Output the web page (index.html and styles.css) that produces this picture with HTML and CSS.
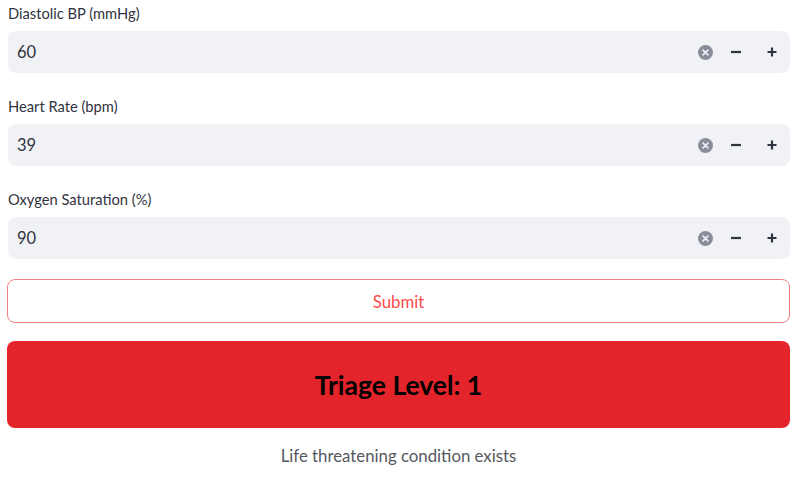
FILE: index.html
```html
<!DOCTYPE html>
<html>
<head>
<meta charset="utf-8">
<link rel="stylesheet" href="styles.css">
</head>
<body>
<main class="page">
  <div class="field">
    <label class="label">Diastolic BP (mmHg)</label>
    <div class="numinput">
      <span class="value">60</span>
      <span class="clear"><svg width="15" height="15" viewBox="0 0 16 16"><circle cx="8" cy="8" r="8" fill="#8a8d99"/><path d="M5.4 5.4 L10.6 10.6 M10.6 5.4 L5.4 10.6" stroke="#f0f2f6" stroke-width="1.7" stroke-linecap="round"/></svg></span>
      <span class="step"><svg width="12" height="12" viewBox="0 0 12 12"><path d="M1 6 H11" stroke="#31333f" stroke-width="2.2"/></svg></span>
      <span class="step"><svg width="12" height="12" viewBox="0 0 12 12"><path d="M1.5 6 H10.5 M6 1.5 V10.5" stroke="#31333f" stroke-width="2.2"/></svg></span>
    </div>
  </div>
  <div class="field">
    <label class="label">Heart Rate (bpm)</label>
    <div class="numinput">
      <span class="value">39</span>
      <span class="clear"><svg width="15" height="15" viewBox="0 0 16 16"><circle cx="8" cy="8" r="8" fill="#8a8d99"/><path d="M5.4 5.4 L10.6 10.6 M10.6 5.4 L5.4 10.6" stroke="#f0f2f6" stroke-width="1.7" stroke-linecap="round"/></svg></span>
      <span class="step"><svg width="12" height="12" viewBox="0 0 12 12"><path d="M1 6 H11" stroke="#31333f" stroke-width="2.2"/></svg></span>
      <span class="step"><svg width="12" height="12" viewBox="0 0 12 12"><path d="M1.5 6 H10.5 M6 1.5 V10.5" stroke="#31333f" stroke-width="2.2"/></svg></span>
    </div>
  </div>
  <div class="field field-last">
    <label class="label">Oxygen Saturation (%)</label>
    <div class="numinput">
      <span class="value">90</span>
      <span class="clear"><svg width="15" height="15" viewBox="0 0 16 16"><circle cx="8" cy="8" r="8" fill="#8a8d99"/><path d="M5.4 5.4 L10.6 10.6 M10.6 5.4 L5.4 10.6" stroke="#f0f2f6" stroke-width="1.7" stroke-linecap="round"/></svg></span>
      <span class="step"><svg width="12" height="12" viewBox="0 0 12 12"><path d="M1 6 H11" stroke="#31333f" stroke-width="2.2"/></svg></span>
      <span class="step"><svg width="12" height="12" viewBox="0 0 12 12"><path d="M1.5 6 H10.5 M6 1.5 V10.5" stroke="#31333f" stroke-width="2.2"/></svg></span>
    </div>
  </div>
  <button class="submit">Submit</button>
  <div class="result">Triage Level: 1</div>
  <p class="desc">Life threatening condition exists</p>
</main>
</body>
</html>
```

FILE: styles.css
```css
html, body {
  margin: 0;
  padding: 0;
  background: #ffffff;
}
.page {
  width: 783px;
  margin-left: 7px;
  padding-top: 3px;
  font-family: "Source Sans Pro", Lato, "Liberation Sans", sans-serif;
  color: #31333f;
  display: flex;
  flex-direction: column;
}
.field {
  display: flex;
  flex-direction: column;
  margin-bottom: 23px;
  padding-left: 1px;
}
.field-last {
  margin-bottom: 0;
}
.label {
  font-size: 14.7px;
  line-height: 20px;
  height: 20px;
  margin-bottom: 8px;
}
.numinput {
  height: 42px;
  background: #f0f2f6;
  border-radius: 8px;
  display: flex;
  align-items: center;
  padding-left: 9px;
}
.value {
  flex: 1;
  font-size: 16.5px;
}
.clear {
  width: 15px;
  height: 15px;
  display: flex;
  margin-right: 5px;
}
.step {
  width: 36px;
  height: 42px;
  display: flex;
  align-items: center;
  justify-content: center;
}
.submit {
  margin-top: 20px;
  height: 44px;
  border: 1px solid #ef8383;
  border-radius: 8px;
  background: #ffffff;
  color: #ff4b4b;
  font-family: inherit;
  font-size: 16.8px;
  padding: 0;
}
.result {
  margin-top: 18px;
  height: 87px;
  background: #e3242b;
  border-radius: 8px;
  display: flex;
  align-items: center;
  justify-content: center;
  font-size: 26.5px;
  font-weight: 700;
  color: #000000;
}
.desc {
  margin: 16px 0 0;
  text-align: center;
  font-size: 16.8px;
  line-height: 24px;
  color: #555860;
}
```
